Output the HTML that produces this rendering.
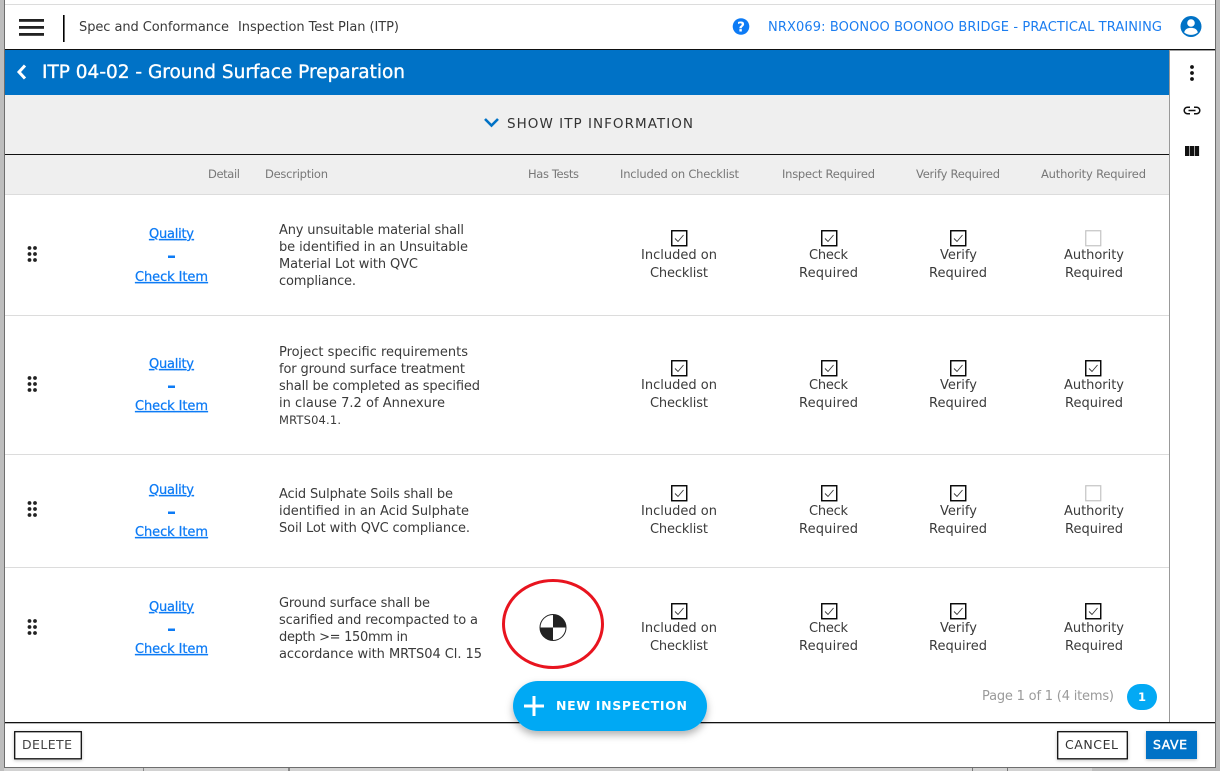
<!DOCTYPE html>
<html><head><meta charset="utf-8"><style>
html,body{margin:0;padding:0;width:1220px;height:771px;overflow:hidden;background:#ccc}
svg{display:block}
text{font-family:"DejaVu Sans","Liberation Sans",sans-serif;font-size:13px;fill:#3a3a3a}
.h{font-size:11.5px;fill:#777}
.l{fill:#0d7bf5;font-size:13px;text-decoration:underline;stroke:#0d7bf5;stroke-width:.25px}
.n{fill:#1b7df0;font-size:13px}
</style></head><body>
<svg width="1220" height="771" viewBox="0 0 1220 771" xmlns="http://www.w3.org/2000/svg">
<defs>
<filter id="s" x="-20%" y="-40%" width="140%" height="200%"><feDropShadow dx="0" dy="4" stdDeviation="4" flood-color="#000" flood-opacity=".3"/></filter>
<filter id="b" x="-20%" y="-20%" width="140%" height="150%"><feDropShadow dx="0" dy="1" stdDeviation="1.5" flood-color="#000" flood-opacity=".25"/></filter>
<g id="dots" fill="#222"><circle cx="29.500" cy="-6" r="1.900"/><circle cx="35" cy="-6" r="1.900"/><circle cx="29.500" cy="0" r="1.900"/><circle cx="35" cy="0" r="1.900"/><circle cx="29.500" cy="6" r="1.900"/><circle cx="35" cy="6" r="1.900"/></g>
<g id="cb"><rect x=".75" y=".75" width="15" height="15" fill="#fff" stroke="#000" stroke-width="1.400"/><path d="M4 8.500l3 3 5.500-6.500" fill="none" stroke="#333" stroke-width=".9"/></g>
<g id="cu"><rect x=".75" y=".75" width="15" height="15" fill="#fff" stroke="#c4c4c4" stroke-width="1.200"/></g>
</defs>

<!-- backdrop -->
<rect width="1220" height="771" fill="#c6c6c6"/>
<rect x="0" y="768" width="1220" height="3" fill="#d2d2d2"/>
<rect x="143" y="768" width="1" height="3" fill="#888"/><rect x="288" y="768" width="2" height="3" fill="#888"/>
<rect x="972" y="768" width="1" height="3" fill="#777"/><rect x="1007" y="768" width="1" height="3" fill="#777"/><rect x="1092" y="768" width="1" height="3" fill="#999"/>
<rect x="1092" y="768" width="128" height="3" fill="#bdbdbd"/>
<rect x="0" y="0" width="4" height="771" fill="#bdbdbd"/>
<rect x="1216" y="0" width="4" height="771" fill="#bdbdbd"/>
<rect x="4" y="0" width="1212" height="768" fill="#6e6e6e"/>
<rect x="5" y="0" width="1210" height="767" fill="#fff"/>
<rect x="5" y="4" width="1210" height="1" fill="#dcdcdc"/>

<!-- top bar -->
<rect x="19" y="19" width="25" height="2.800" fill="#222"/><rect x="19" y="26" width="25" height="2.800" fill="#222"/><rect x="19" y="33" width="25" height="2.800" fill="#222"/>
<rect x="63" y="15" width="1.600" height="27" fill="#000"/>
<text x="79" y="31" textLength="150">Spec and Conformance</text>
<text x="238" y="31" textLength="161">Inspection Test Plan (ITP)</text>
<circle cx="741" cy="26.500" r="8.300" fill="#0d7bf5"/>
<text x="741" y="31.500" text-anchor="middle" style="font-size:13.500px;font-weight:700;fill:#fff">?</text>
<text class="n" x="768" y="31" textLength="394">NRX069: BOONOO BOONOO BRIDGE - PRACTICAL TRAINING</text>
<circle cx="1191" cy="26.500" r="10.500" fill="#0072c6"/>
<circle cx="1191" cy="23" r="3.800" fill="#fff"/>
<path d="M1184.200 32.500c.6-3.400 3.600-4.600 6.800-4.600s6.200 1.200 6.800 4.600c-1.800 1.600-4.200 2.400-6.800 2.400s-5-.8-6.800-2.400z" fill="#fff"/>
<rect x="5" y="49" width="1210" height="1.400" fill="#111"/>

<!-- blue title -->
<rect x="5" y="50" width="1164" height="45" fill="#0072c6"/>
<path d="M25 65.500l-6 6.500 6 6.500" fill="none" stroke="#fff" stroke-width="3"/>
<text x="42" y="78" textLength="363" style="font-size:18.500px;fill:#fff;stroke:#fff;stroke-width:.35px">ITP 04-02 - Ground Surface Preparation</text>

<!-- info strip -->
<rect x="5" y="95" width="1164" height="59" fill="#efefef"/>
<path d="M485 119l6.500 6.500 6.500-6.500" fill="none" stroke="#0072c6" stroke-width="2.600"/>
<text x="507" y="128" textLength="186" style="font-size:13.500px;fill:#333">SHOW ITP INFORMATION</text>
<rect x="5" y="154" width="1164" height="1.200" fill="#111"/>

<!-- table header -->
<rect x="5" y="155" width="1164" height="39" fill="#efefef"/>
<rect x="5" y="194" width="1164" height="1" fill="#dcdcdc"/>
<text class="h" x="208" y="178" textLength="32">Detail</text>
<text class="h" x="265" y="178" textLength="63">Description</text>
<text class="h" x="528" y="178" textLength="51">Has Tests</text>
<text class="h" x="620" y="178" textLength="119">Included on Checklist</text>
<text class="h" x="782" y="178" textLength="93">Inspect Required</text>
<text class="h" x="916" y="178" textLength="84">Verify Required</text>
<text class="h" x="1041" y="178" textLength="105">Authority Required</text>

<!-- sidebar -->
<rect x="1169" y="50" width="1" height="672" fill="#999"/>
<circle cx="1192" cy="67" r="1.900" fill="#111"/><circle cx="1192" cy="73" r="1.900" fill="#111"/><circle cx="1192" cy="79" r="1.900" fill="#111"/>
<path d="M1190 107.200h-2.500a3.300 3.300 0 0 0 0 6.600h2.500M1194 107.200h2.500a3.300 3.300 0 0 1 0 6.600h-2.500M1188.500 110.500h7" fill="none" stroke="#111" stroke-width="1.500"/>
<rect x="1185" y="146" width="4.300" height="10" fill="#111"/><rect x="1189.900" y="146" width="4.300" height="10" fill="#111"/><rect x="1194.800" y="146" width="4.300" height="10" fill="#111"/>

<!-- row lines -->
<rect x="5" y="315" width="1164" height="1" fill="#dcdcdc"/>
<rect x="5" y="454" width="1164" height="1" fill="#dcdcdc"/>
<rect x="5" y="567" width="1164" height="1" fill="#dcdcdc"/>

<!-- Row 1 -->
<use href="#dots" y="254"/>
<text class="l" x="149" y="238" textLength="45">Quality</text>
<rect x="168" y="255.500" width="7" height="2.500" fill="#0d7bf5"/>
<text class="l" x="135" y="281" textLength="73">Check Item</text>
<text x="279" y="234" textLength="185">Any unsuitable material shall</text>
<text x="279" y="251" textLength="189">be identified in an Unsuitable</text>
<text x="279" y="268" textLength="139">Material Lot with QVC</text>
<text x="279" y="285" textLength="77">compliance.</text>
<use href="#cb" x="671" y="230"/><use href="#cb" x="821" y="230"/><use href="#cb" x="950" y="230"/><use href="#cu" x="1085" y="230"/>
<text x="641" y="259" textLength="76">Included on</text><text x="650" y="277" textLength="58">Checklist</text>
<text x="809" y="259" textLength="39">Check</text><text x="799" y="277" textLength="59">Required</text>
<text x="940" y="259" textLength="37">Verify</text><text x="929" y="277" textLength="58">Required</text>
<text x="1064" y="259" textLength="60">Authority</text><text x="1065" y="277" textLength="58">Required</text>

<!-- Row 2 -->
<use href="#dots" y="384"/>
<text class="l" x="149" y="368" textLength="45">Quality</text>
<rect x="168" y="385.500" width="7" height="2.500" fill="#0d7bf5"/>
<text class="l" x="135" y="410" textLength="73">Check Item</text>
<text x="279" y="356" textLength="189">Project specific requirements</text>
<text x="279" y="373" textLength="186">for ground surface treatment</text>
<text x="279" y="390" textLength="201">shall be completed as specified</text>
<text x="279" y="407" textLength="166">in clause 7.2 of Annexure</text>
<text x="279" y="424" textLength="62" style="font-size:11.500px">MRTS04.1.</text>
<use href="#cb" x="671" y="360"/><use href="#cb" x="821" y="360"/><use href="#cb" x="950" y="360"/><use href="#cb" x="1085" y="360"/>
<text x="641" y="389" textLength="76">Included on</text><text x="650" y="407" textLength="58">Checklist</text>
<text x="809" y="389" textLength="39">Check</text><text x="799" y="407" textLength="59">Required</text>
<text x="940" y="389" textLength="37">Verify</text><text x="929" y="407" textLength="58">Required</text>
<text x="1064" y="389" textLength="60">Authority</text><text x="1065" y="407" textLength="58">Required</text>

<!-- Row 3 -->
<use href="#dots" y="509"/>
<text class="l" x="149" y="494" textLength="45">Quality</text>
<rect x="168" y="511.500" width="7" height="2.500" fill="#0d7bf5"/>
<text class="l" x="135" y="536" textLength="73">Check Item</text>
<text x="279" y="498" textLength="174">Acid Sulphate Soils shall be</text>
<text x="279" y="515" textLength="190">identified in an Acid Sulphate</text>
<text x="279" y="532" textLength="191">Soil Lot with QVC compliance.</text>
<use href="#cb" x="671" y="485"/><use href="#cb" x="821" y="485"/><use href="#cb" x="950" y="485"/><use href="#cu" x="1085" y="485"/>
<text x="641" y="515" textLength="76">Included on</text><text x="650" y="533" textLength="58">Checklist</text>
<text x="809" y="515" textLength="39">Check</text><text x="799" y="533" textLength="59">Required</text>
<text x="940" y="515" textLength="37">Verify</text><text x="929" y="533" textLength="58">Required</text>
<text x="1064" y="515" textLength="60">Authority</text><text x="1065" y="533" textLength="58">Required</text>

<!-- Row 4 -->
<use href="#dots" y="627"/>
<text class="l" x="149" y="611" textLength="45">Quality</text>
<rect x="168" y="628.500" width="7" height="2.500" fill="#0d7bf5"/>
<text class="l" x="135" y="653" textLength="73">Check Item</text>
<text x="279" y="607" textLength="151">Ground surface shall be</text>
<text x="279" y="624" textLength="199">scarified and recompacted to a</text>
<text x="279" y="641" textLength="129">depth &gt;= 150mm in</text>
<text x="279" y="658" textLength="203">accordance with MRTS04 Cl. 15</text>
<use href="#cb" x="671" y="603"/><use href="#cb" x="821" y="603"/><use href="#cb" x="950" y="603"/><use href="#cb" x="1085" y="603"/>
<text x="641" y="632" textLength="76">Included on</text><text x="650" y="650" textLength="58">Checklist</text>
<text x="809" y="632" textLength="39">Check</text><text x="799" y="650" textLength="59">Required</text>
<text x="940" y="632" textLength="37">Verify</text><text x="929" y="650" textLength="58">Required</text>
<text x="1064" y="632" textLength="60">Authority</text><text x="1065" y="650" textLength="58">Required</text>

<!-- test marker -->
<circle cx="553" cy="627.500" r="13" fill="#fff" stroke="#222" stroke-width="1"/>
<path d="M553 627.500V614.500a13 13 0 0 1 13 13zM553 627.500V640.500a13 13 0 0 1-13-13z" fill="#222"/>
<ellipse cx="553" cy="624" rx="49.500" ry="43.500" fill="none" stroke="#e8141f" stroke-width="3"/>

<!-- pager -->
<text x="982" y="700" textLength="132" style="font-size:13px;fill:#9a9a9a">Page 1 of 1 (4 items)</text>
<rect x="1127" y="684" width="30" height="26" rx="13" fill="#03a9f4"/>
<text x="1142" y="701" text-anchor="middle" style="font-size:11.500px;font-weight:700;fill:#fff">1</text>

<!-- footer -->
<rect x="5" y="722" width="1210" height="1.300" fill="#111"/>
<rect x="14.700" y="731.700" width="66.600" height="27.100" fill="#fff" stroke="#111" stroke-width="1.300" filter="url(#b)"/>
<text x="22" y="749" textLength="50" style="font-size:12.500px;fill:#444">DELETE</text>
<rect x="1057.700" y="731.700" width="69.600" height="27.100" fill="#fff" stroke="#111" stroke-width="1.300" filter="url(#b)"/>
<text x="1065" y="749" textLength="53" style="font-size:12.500px;fill:#333">CANCEL</text>
<rect x="1146" y="731" width="51" height="28" fill="#0072c6" filter="url(#b)"/>
<text x="1153" y="749" textLength="34" style="font-size:12.500px;fill:#fff;stroke:#fff;stroke-width:.4px">SAVE</text>

<!-- FAB -->
<rect x="513" y="681" width="194" height="50" rx="25" fill="#03a9f4" filter="url(#s)"/>
<rect x="524" y="704.500" width="20" height="3" fill="#fff"/><rect x="532.500" y="696" width="3" height="20" fill="#fff"/>
<text x="556" y="710" textLength="131" style="font-size:12.500px;font-weight:700;fill:#fff">NEW INSPECTION</text>
</svg>
</body></html>
